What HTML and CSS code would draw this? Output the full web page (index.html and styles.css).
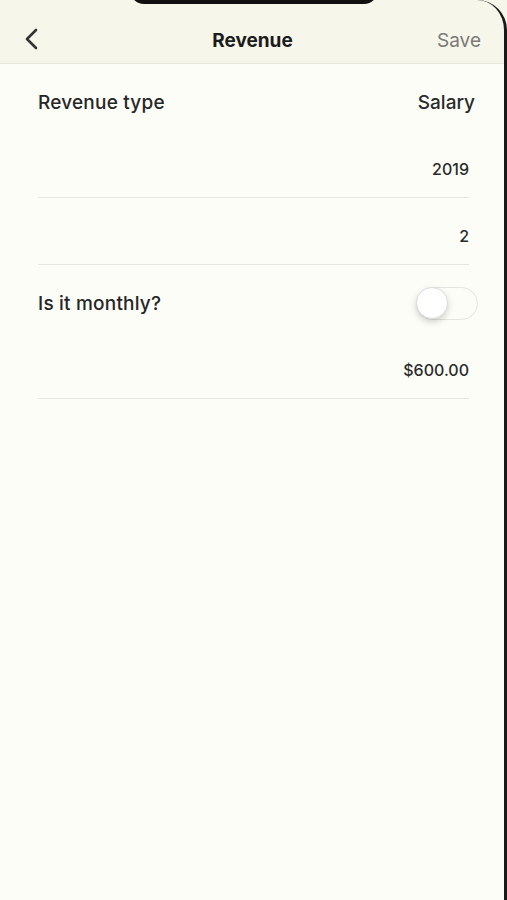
FILE: index.html
```html
<!DOCTYPE html>
<html>

<head>
    <meta charset="UTF-8" />
    <meta name="viewport" content="width=device-width, initial-scale=1.0">
    <title>Revenue</title>
    <link rel="stylesheet" href="styles.css">
</head>

<body>
    <!-- 手机屏幕 -->
    <div class="screen">
        <!-- 刘海和边框 -->
        <div class="notch"></div>
        <div class="edge"></div>

        <!-- 顶部导航 -->
        <div class="nav">
            <a class="nav-back" href="javascript:;">
                <svg width="16" height="22" viewBox="0 0 16 22">
                    <path d="M12 2 L3 11 L12 20" fill="none" stroke="#333" stroke-width="2.6" stroke-linecap="round" stroke-linejoin="round" />
                </svg>
            </a>
            <div class="nav-title">Revenue</div>
            <a class="nav-save" href="javascript:;">Save</a>
        </div>

        <!-- 表单 -->
        <div class="form">
            <div class="row">
                <span class="label">Revenue type</span>
                <span class="value value-big">Salary</span>
            </div>
            <div class="row row-line">
                <span class="value">2019</span>
            </div>
            <div class="row row-line">
                <span class="value">2</span>
            </div>
            <div class="row">
                <span class="label">Is it monthly?</span>
                <span class="toggle"><span class="knob"></span></span>
            </div>
            <div class="row row-line">
                <span class="value">$600.00</span>
            </div>
        </div>
    </div>
</body>

</html>
```

FILE: styles.css
```css
* {
    margin: 0px;
    padding: 0px;
    box-sizing: border-box;
}

body {
    background-color: #fdfdf8;
    font-family: Inter, "Liberation Sans", Arial, sans-serif;
    color: #222;
}

/* 屏幕容器 */
.screen {
    position: relative;
    width: 507px;
    height: 900px;
    overflow: hidden;
    background-color: #fdfdf8;
}

/* 刘海 */
.notch {
    position: absolute;
    left: 130px;
    top: -20px;
    width: 248px;
    height: 24px;
    background-color: #111;
    border-radius: 0 0 14px 14px;
}

/* 右侧黑边 */
.edge {
    position: absolute;
    right: 0;
    top: 0;
    width: 40px;
    height: 900px;
    border-right: 3px solid #1a1a1a;
    border-radius: 0 30px 0 0;
    pointer-events: none;
}

/* 导航栏 */
.nav {
    height: 64px;
    padding: 17px 26px 0 24px;
    display: flex;
    align-items: center;
    justify-content: space-between;
    background-color: #f7f6ea;
    border-bottom: 1px solid #e8e7dc;
}

.nav-back {
    display: flex;
    width: 60px;
    margin-top: -3px;
}

.nav-title {
    font-size: 19px;
    font-weight: 700;
    color: #1c1c1c;
}

.nav-save {
    width: 60px;
    text-align: right;
    font-size: 19px;
    color: #7a7a76;
    text-decoration: none;
}

/* 表单 */
.form {
    padding: 0 38px;
}

.row {
    height: 67px;
    padding-top: 9px;
    display: flex;
    align-items: center;
    justify-content: space-between;
}

.row-line {
    justify-content: flex-end;
    border-bottom: 1px solid #e7e7e2;
}

.label {
    font-size: 19px;
    font-weight: 500;
    letter-spacing: 0.2px;
    color: #262626;
}

.value {
    font-size: 16px;
    font-weight: 500;
    color: #2a2a2a;
}

.value-big {
    font-size: 19px;
    margin-right: -6px;
}

/* 开关 */
.toggle {
    position: relative;
    width: 62px;
    height: 33px;
    margin-right: -9px;
    border: 1.5px solid #e4e4e0;
    border-radius: 17px;
    background-color: #fdfdf8;
}

.knob {
    position: absolute;
    left: -1px;
    top: -1px;
    width: 32px;
    height: 32px;
    border-radius: 50%;
    background-color: #fff;
    border: 1px solid #ddd;
    box-shadow: 0 3px 6px rgba(0, 0, 0, 0.18);
}
```
